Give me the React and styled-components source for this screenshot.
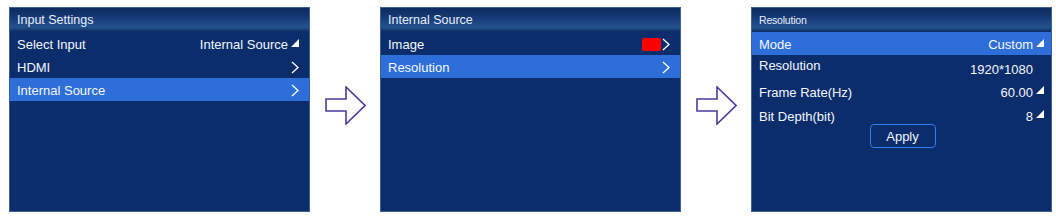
import React from 'react';
import styled, { createGlobalStyle } from 'styled-components';

const GlobalStyle = createGlobalStyle`
  body {
    margin: 0;
    background: #ffffff;
    font-family: "Liberation Sans", Arial, sans-serif;
  }
`;

function Triangle() {
  return (
    <TriSvg width="8" height="8" viewBox="0 0 8 8">
      <polygon points="0,8 8,0 8,8" fill="#ffffff" />
    </TriSvg>
  );
}

function Chevron() {
  return (
    <ChevSvg width="8" height="13" viewBox="0 0 8 13">
      <polyline points="1,1 7,6.5 1,12" fill="none" stroke="#ffffff" strokeWidth="1.3" />
    </ChevSvg>
  );
}

function Arrow() {
  return (
    <ArrowSvg width="41" height="39" viewBox="0 0 41 39">
      <polygon
        points="1,13 21,13 21,1 40,19.5 21,38 21,25 1,25"
        fill="#ffffff"
        stroke="#4b3c9c"
        strokeWidth="1.6"
        strokeLinejoin="miter"
      />
    </ArrowSvg>
  );
}

function App() {
  return (
    <>
      <GlobalStyle />
      <Page>
        <Panel>
          <Header>Input Settings</Header>
          <Row>
            <Label>Select Input</Label>
            <Value>Internal Source<Triangle /></Value>
          </Row>
          <Row>
            <Label>HDMI</Label>
            <Value><Chevron /></Value>
          </Row>
          <Row $active>
            <Label>Internal Source</Label>
            <Value><Chevron /></Value>
          </Row>
        </Panel>

        <Arrow />

        <Panel>
          <Header>Internal Source</Header>
          <Row>
            <Label>Image</Label>
            <Value><Swatch /><Chevron /></Value>
          </Row>
          <Row $active>
            <Label>Resolution</Label>
            <Value><Chevron /></Value>
          </Row>
        </Panel>

        <Arrow />

        <Panel>
          <Header $small>Resolution</Header>
          <Row $active $pad="7px">
            <Label>Mode</Label>
            <Value>Custom<Triangle /></Value>
          </Row>
          <Row $h="24px" $pad="7px">
            <Label $shift="-2px">Resolution</Label>
            <Value $shift="2px" $gap="11px">1920*1080</Value>
          </Row>
          <Row $h="24px" $pad="7px">
            <Label>Frame Rate(Hz)</Label>
            <Value $shift="1px">60.00<Triangle /></Value>
          </Row>
          <Row $h="24px" $pad="7px">
            <Label>Bit Depth(bit)</Label>
            <Value>8<Triangle /></Value>
          </Row>
          <ButtonRow>
            <ApplyButton>Apply</ApplyButton>
          </ButtonRow>
        </Panel>
      </Page>
    </>
  );
}

export default App;

const Page = styled.div`
  display: flex;
  align-items: flex-start;
  padding: 7px 0 0 9px;
`;

const Panel = styled.div`
  box-sizing: border-box;
  width: 301px;
  height: 205px;
  background: #0b2d6c;
  border: 1px solid #3d5f9a;
  display: flex;
  flex-direction: column;
  color: #f4f7ff;
`;

const Header = styled.div`
  height: 24px;
  display: flex;
  align-items: center;
  padding-left: 7px;
  font-size: ${(p) => (p.$small ? '10.5px' : '12.5px')};
  letter-spacing: ${(p) => (p.$small ? '-0.2px' : '0')};
  color: #e9eefa;
  background: linear-gradient(
    to bottom,
    #0d2a60 0%,
    #173d7a 45%,
    #24528f 80%,
    #143670 94%,
    #0c2a62 100%
  );
`;

const Row = styled.div`
  height: ${(p) => p.$h || '23px'};
  display: flex;
  align-items: center;
  justify-content: space-between;
  padding: 0 ${(p) => p.$pad || '10px'} 0 7px;
  font-size: 13px;
  background: ${(p) => (p.$active ? '#2d6ed8' : 'transparent')};
`;

const Label = styled.span`
  position: relative;
  top: ${(p) => p.$shift || '1px'};
`;

const Value = styled.span`
  display: flex;
  align-items: center;
  gap: 3px;
  position: relative;
  top: ${(p) => p.$shift || '1px'};
  margin-right: ${(p) => p.$gap || '0'};
`;

const TriSvg = styled.svg`
  display: block;
  margin-top: -4px;
`;

const ChevSvg = styled.svg`
  display: block;
`;

const Swatch = styled.span`
  display: block;
  width: 19px;
  height: 13px;
  border-radius: 2px;
  background: #ff0000;
  margin-right: -2px;
`;

const ArrowSvg = styled.svg`
  display: block;
  margin: 79px 14px 0 15px;
`;

const ButtonRow = styled.div`
  display: flex;
  justify-content: center;
  padding-left: 2px;
  margin-top: -3px;
`;

const ApplyButton = styled.button`
  box-sizing: border-box;
  width: 66px;
  height: 24px;
  border: 1.5px solid #2f7df0;
  border-radius: 4px;
  background: transparent;
  color: #f4f7ff;
  font-family: "Liberation Sans", Arial, sans-serif;
  font-size: 13px;
  padding: 0;
`;
